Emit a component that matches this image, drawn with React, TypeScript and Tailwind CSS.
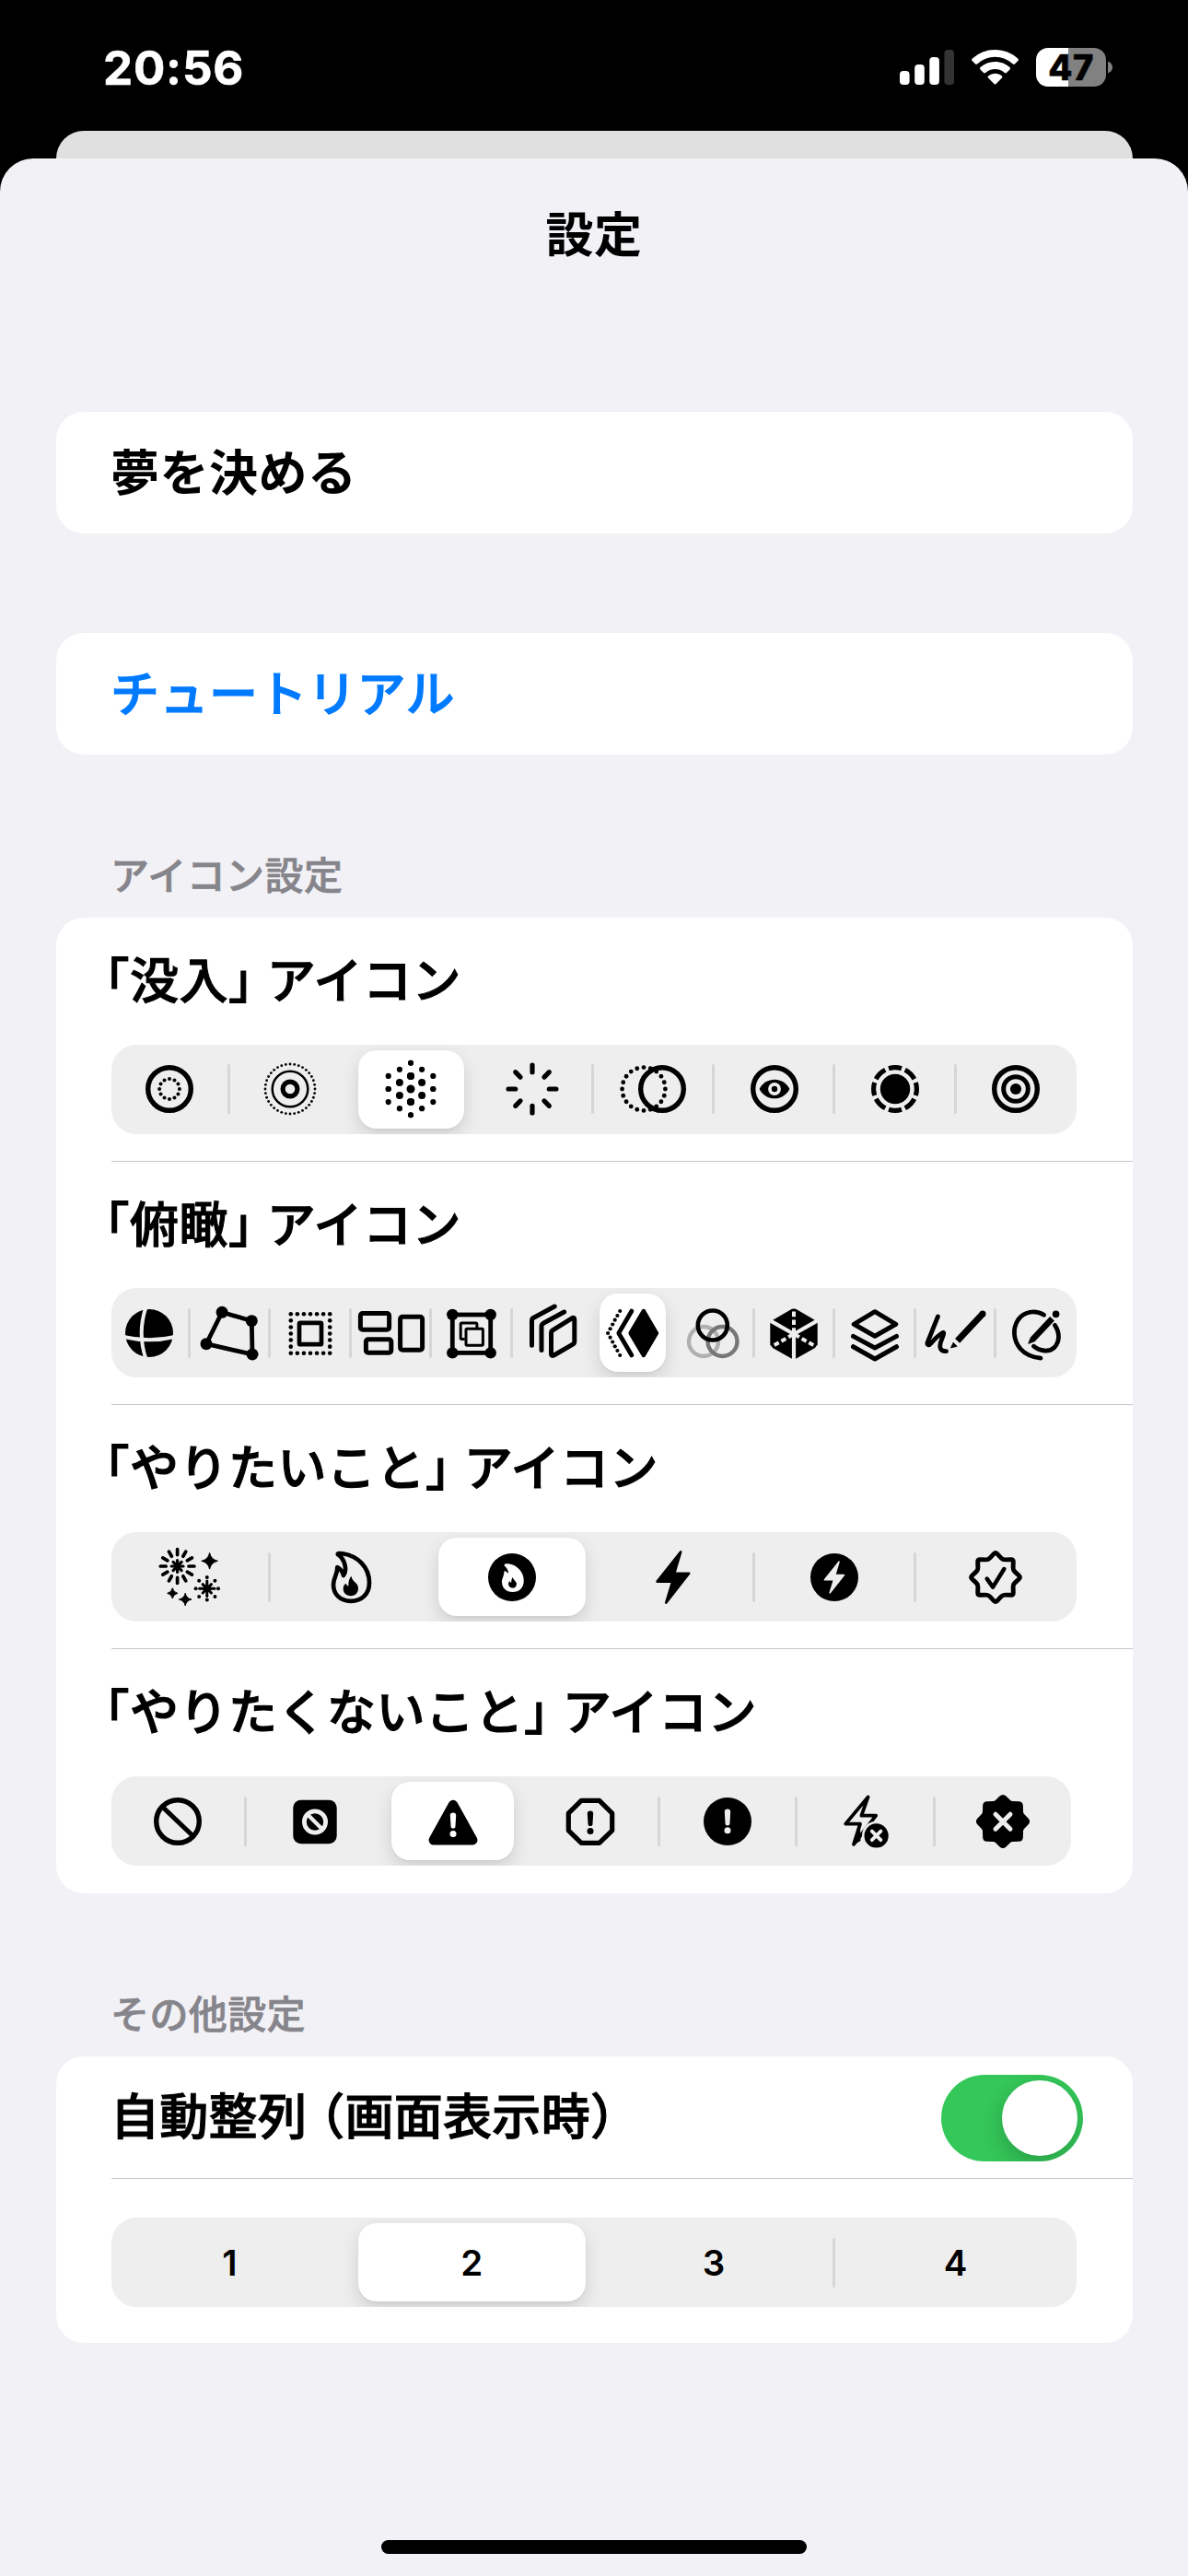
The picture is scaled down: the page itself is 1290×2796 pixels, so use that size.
import React from "react";

const TRACK = "#eeeeef";

function Glyph({ children }: { children: React.ReactNode }) {
  return (
    <svg viewBox="-40 -40 80 80" className="size-20 shrink-0 overflow-visible" fill="none" stroke="none">
      {children}
    </svg>
  );
}

function polar(r: number, deg: number, cx = 0, cy = 0): [number, number] {
  const a = (deg * Math.PI) / 180;
  return [cx + r * Math.cos(a), cy + r * Math.sin(a)];
}

function DotRing({ n, r, dot, cx = 0, cy = 0 }: { n: number; r: number; dot: number; cx?: number; cy?: number }) {
  return (
    <g fill="#000">
      {Array.from({ length: n }, (_, i) => {
        const [x, y] = polar(r, (360 / n) * i, cx, cy);
        return <circle key={i} cx={x} cy={y} r={dot} />;
      })}
    </g>
  );
}

function Rays({ n, from, to, w, cx = 0, cy = 0 }: { n: number; from: number; to: number; w: number; cx?: number; cy?: number }) {
  return (
    <g stroke="#000" strokeWidth={w} strokeLinecap="round">
      {Array.from({ length: n }, (_, i) => {
        const [x1, y1] = polar(from, (360 / n) * i, cx, cy);
        const [x2, y2] = polar(to, (360 / n) * i, cx, cy);
        return <line key={i} x1={x1} y1={y1} x2={x2} y2={y2} />;
      })}
    </g>
  );
}

function Sparkle({ x, y, r }: { x: number; y: number; r: number }) {
  const k = r * 0.17;
  return (
    <path
      fill="#000"
      stroke="#000"
      strokeWidth="1"
      strokeLinejoin="round"
      d={`M${x},${y - r}Q${x + k},${y - k} ${x + r},${y}Q${x + k},${y + k} ${x},${y + r}Q${x - k},${y + k} ${x - r},${y}Q${x - k},${y - k} ${x},${y - r}Z`}
    />
  );
}

/* Eight-pointed seal with softened tips */
function sealPath(outer: number, inner: number) {
  const pts = Array.from({ length: 16 }, (_, i) => polar(i % 2 ? inner : outer, i * 22.5 - 90));
  const mix = (a: number[], b: number[], t: number) => [a[0] + (b[0] - a[0]) * t, a[1] + (b[1] - a[1]) * t];
  return (
    pts
      .map((p, i) => {
        const prev = pts[(i + 15) % 16];
        const next = pts[(i + 1) % 16];
        const a = mix(p, prev, 0.22);
        const b = mix(p, next, 0.22);
        return `${i ? "L" : "M"}${a[0]},${a[1]}Q${p[0]},${p[1]} ${b[0]},${b[1]}`;
      })
      .join("") + "Z"
  );
}

const FLAME =
  "M-14,-24.8C-15,-26.5 -11,-26 -9,-25.7C8,-23 20,-11 20,6C20,18 12,25.8 0,25.8C-12,25.8 -19,18 -19,8C-19,0 -14.5,-2 -14.7,-11C-11,-9 -9,-6 -8,-2C-4,-8 -6,-19 -14,-24.8Z";
const EMBER = "M0.5,-1.3C1.5,5 8,6 8,12C8,17 4.5,20.2 0,20.2C-5,20.2 -8.3,17 -8.3,12.3C-8.3,9.5 -7,7.5 -5.2,6.8C-4.8,8 -4,9.3 -2.6,9.8C-2.8,6 -2,1 0.5,-1.3Z";
const BOLT = "M8.2,-27.6L1.2,-4.2L17.2,-4.2L-7.8,27.6L-0.8,4.6L-17.4,4.6Z";

function Bang({ color, top = -9, bottom = 4.5, dot = 10 }: { color: string; top?: number; bottom?: number; dot?: number }) {
  return (
    <g fill={color}>
      <path d={`M-3.2,${top}A3.2,3 0 0 1 3.2,${top}L2.5,${bottom}A2.5,2.6 0 0 1 -2.5,${bottom}Z`} />
      <circle cx="0" cy={dot} r="3.5" />
    </g>
  );
}

const Ring = ({ r = 23.3, w = 5.4, cx = 0, cy = 0, c = "#000" }: { r?: number; w?: number; cx?: number; cy?: number; c?: string }) => (
  <circle cx={cx} cy={cy} r={r} stroke={c} strokeWidth={w} />
);

const immersionIcons = [
  <Glyph>
    <Ring />
    <DotRing n={12} r={10.9} dot={2} />
  </Glyph>,
  <Glyph>
    <DotRing n={36} r={27} dot={1.4} />
    <Ring r={19.3} w={2.5} />
    <Ring r={7.9} w={5.2} />
  </Glyph>,
  <Glyph>
    <g fill="#000">
      <circle r="4.5" />
      {[[0, 14.1, 4], [0, 28.2, 3], [12.1, 7, 4], [12.1, 21.2, 3.1], [24.3, 14.1, 3.1], [24.3, 0, 3.1]].map(([x, y, r]) =>
        [[1, 1], [1, -1], [-1, 1], [-1, -1]].map(([a, b]) => <circle key={`${x}${y}${a}${b}`} cx={x * a} cy={y * b} r={r} />)
      )}
    </g>
  </Glyph>,
  <Glyph>
    <Rays n={8} from={18.3} to={25.9} w={5.2} />
  </Glyph>,
  <Glyph>
    <DotRing n={20} r={23.4} dot={2.4} cx={-10} />
    <Ring cx={10} />
  </Glyph>,
  <Glyph>
    <Ring />
    <path fill="#000" d="M-16.4,0C-13,-7 -6.5,-10.3 0,-10.3C6.5,-10.3 13,-7 16.4,0C13,7 6.5,10.3 0,10.3C-6.5,10.3 -13,7 -16.4,0Z" />
    <circle r="6.9" fill={TRACK} />
    <circle r="3.2" fill="#000" />
  </Glyph>,
  <Glyph>
    <circle r="23.4" stroke="#000" strokeWidth="5.2" pathLength="80" strokeDasharray="7.8 2.2" strokeDashoffset="3.9" />
    <circle r="16.2" fill="#000" />
  </Glyph>,
  <Glyph>
    <Ring />
    <Ring r={13.3} w={5} />
    <circle r="6.1" fill="#000" />
  </Glyph>,
];

const overviewIcons = [
  <Glyph>
    <circle r="26" fill="#000" />
    <g stroke={TRACK} strokeWidth="4">
      <path d="M-3.6,-28Q-13,0 -3.6,28" />
      <path d="M-28,4Q0,10.6 28,4" />
    </g>
  </Glyph>,
  <Glyph>
    <path d="M-7.9,-22.7L24.3,-13.3L25,23L-25,11.7Z" stroke="#000" strokeWidth="4.8" />
    <g fill="#000">
      <circle cx="-7.9" cy="-22.7" r="6.5" />
      <circle cx="24.3" cy="-13.3" r="6.5" />
      <circle cx="25" cy="23" r="6.5" />
      <circle cx="-25" cy="11.7" r="6.5" />
    </g>
  </Glyph>,
  <Glyph>
    <g fill="#000">
      {[-3, -2, -1, 0, 1, 2, 3].map((i) =>
        [-3, -2, -1, 0, 1, 2, 3].map((j) =>
          Math.max(Math.abs(i), Math.abs(j)) === 3 ? <circle key={`${i}${j}`} cx={i * 7.07} cy={j * 7.07 + 0.5} r="2.3" /> : null
        )
      )}
    </g>
    <rect x="-12" y="-11.2" width="24" height="23.4" rx="1" stroke="#000" strokeWidth="4.7" />
  </Glyph>,
  <Glyph>
    <g stroke="#000" strokeWidth="5">
      <rect x="-33.6" y="-21.5" width="31.2" height="17.8" rx="2.4" />
      <rect x="-27.6" y="6.8" width="27.4" height="14.4" rx="2.4" />
      <rect x="9.6" y="-17.8" width="24" height="36" rx="2.4" />
    </g>
  </Glyph>,
  <Glyph>
    <rect x="-20.7" y="-20" width="41.4" height="41.4" stroke="#000" strokeWidth="4.8" />
    <g fill="#000">
      <circle cx="-20.7" cy="-20" r="6.2" />
      <circle cx="20.7" cy="-20" r="6.2" />
      <circle cx="-20.7" cy="21.4" r="6.2" />
      <circle cx="20.7" cy="21.4" r="6.2" />
    </g>
    <g stroke="#000" strokeWidth="3">
      <path d="M-7.3,6.6H-10.6A1.2,1.2 0 0 1 -11.8,5.4V-9.7A1.2,1.2 0 0 1 -10.6,-10.9H4.7A1.2,1.2 0 0 1 5.9,-9.7V-6" />
      <rect x="-6" y="-4.8" width="18.4" height="18" rx="1.2" />
    </g>
  </Glyph>,
  <Glyph>
    <g stroke="#000" strokeWidth="5" strokeLinecap="round" strokeLinejoin="round">
      <path d="M-22.5,13.3V-13.6Q-22.5,-15.5 -20.5,-16.8L2.2,-29" />
      <path d="M-12,18.6V-7.6Q-12,-9.5 -10,-10.7L12.6,-23" />
      <path d="M-1.5,0Q-1.5,-2 0.5,-3.3L21,-16.2Q23.8,-17.6 23.8,-14.6V9Q23.8,11 22,12.1L1.5,24Q-1.5,25.4 -1.5,22.5Z" />
    </g>
  </Glyph>,
  <Glyph>
    <path d="M-2.4,0L11.9,-24L26,0L11.9,24Z" fill="#000" stroke="#000" strokeWidth="4.4" strokeLinejoin="round" />
    <path d="M-1.1,-24L-15.2,0L-1.1,24" stroke="#000" strokeWidth="4.8" strokeLinecap="round" strokeLinejoin="round" />
    <g fill="#000">
      <circle cx="-26.9" cy="0" r="2.1" />
      {[[-13.8, 24], [-16.6, 19], [-19.3, 14.3], [-21.8, 9.5], [-24.4, 4.7]].map(([x, y]) => (
        <React.Fragment key={x}>
          <circle cx={x} cy={y} r="2.1" />
          <circle cx={x} cy={-y} r="2.1" />
        </React.Fragment>
      ))}
    </g>
  </Glyph>,
  <Glyph>
    <Ring cx={-11} cy={9} r={16} w={4.4} c="#b0b0b0" />
    <Ring cx={9.5} cy={9} r={16} w={4.4} c="#777777" />
    <Ring cx={-1.2} cy={-8.5} r={16} w={4.6} />
  </Glyph>,
  <Glyph>
    <path d="M0,-27.5L25.7,-12.5V14.5L0,29L-25.7,14.5V-12.5Z" fill="#000" />
    <g stroke={TRACK} strokeWidth="4.2">
      <path d="M0,1V31M0,1L-27.5,-14.6M0,1L27.5,-14.6" />
    </g>
    <g stroke={TRACK} strokeWidth="4" strokeDasharray="5.6 3.2" strokeDashoffset="-1.2">
      <path d="M0,1V-29" />
      <path d="M0,1L-27.5,16.6" />
      <path d="M0,1L27.5,16.6" />
    </g>
  </Glyph>,
  <Glyph>
    <g stroke="#000" strokeWidth="5" strokeLinejoin="round" strokeLinecap="round">
      <path d="M0,-23.3L22.8,-9.7L0,3.2L-22.8,-9.7Z" />
      <path d="M-23.5,3.4L0,16L23.5,3.4" />
      <path d="M-23.5,14.7L0,28L23.5,14.7" />
    </g>
  </Glyph>,
  <Glyph>
    <path
      d="M-19.6,-18L-31,10.5C-31.5,13.5 -29,13.5 -27,11C-21,4 -17,1 -14,-0.6C-12.5,-1 -13.5,2 -15.5,7C-18.5,14 -18,20 -10.5,19.6"
      stroke="#000"
      strokeWidth="4.8"
      strokeLinecap="round"
      strokeLinejoin="round"
    />
    <path d="M29.2,-21.2L1.6,8.4" stroke="#000" strokeWidth="7" />
    <circle cx="29" cy="-21" r="3.5" fill="#000" />
    <path d="M-2.8,10.2L1.2,14.3L-5.6,16Z" fill="#000" stroke="#000" strokeWidth="0.8" strokeLinejoin="round" />
  </Glyph>,
  <Glyph>
    <g stroke="#000" strokeWidth="4.8" strokeLinecap="round">
      <path d="M8.6,-19.8C-1,-25.6 -13,-23.6 -19.5,-14.5C-26,-4.5 -24.5,8 -17,17C-12,22.6 -4,26.2 5,27.2" />
      <path d="M-2.6,14.2C4,19.6 14,21.2 20,15.5C25.8,9 26,-0.5 20.4,-8.6" />
    </g>
    <path d="M17.5,-15.8L-3.4,6.5" stroke="#000" strokeWidth="6.6" />
    <path d="M-5.7,4.6L-1,8.6L-8.3,11.4Z" fill="#000" stroke="#000" strokeWidth="0.8" strokeLinejoin="round" />
    <circle cx="21.6" cy="-20.6" r="3.8" fill="#000" />
  </Glyph>,
];

const wantIcons = [
  <Glyph>
    <Rays n={12} from={12.4} to={18.3} w={3.7} cx={-13.4} cy={-12} />
    <Rays n={8} from={0} to={6.4} w={3.2} cx={-13.4} cy={-12} />
    <Rays n={4} from={0} to={8.2} w={3} cx={18.8} cy={12.3} />
    <g transform="rotate(45 18.8 12.3)">
      <Rays n={4} from={0} to={6.6} w={3} cx={18.8} cy={12.3} />
    </g>
    <circle cx="18.8" cy="12.3" r="4" fill="#000" />
    <DotRing n={8} r={12.2} dot={2} cx={18.8} cy={12.3} />
    <Sparkle x={21.6} y={-17.7} r={8.8} />
    <Sparkle x={-18.7} y={17.3} r={5.6} />
    <Sparkle x={-4.8} y={24} r={6.8} />
  </Glyph>,
  <Glyph>
    <path d={FLAME} stroke="#000" strokeWidth="4.7" strokeLinejoin="round" />
    <path d={EMBER} fill="#000" />
  </Glyph>,
  <Glyph>
    <circle r="26" fill="#000" />
    <g transform="translate(0.6 0.6) scale(0.545)">
      <path d={FLAME} fill="#fff" stroke="#fff" strokeWidth="4.7" strokeLinejoin="round" />
      <path d={EMBER} fill="#000" />
    </g>
  </Glyph>,
  <Glyph>
    <path d={BOLT} fill="#000" stroke="#000" strokeWidth="2.6" strokeLinejoin="round" />
  </Glyph>,
  <Glyph>
    <circle r="26" fill="#000" />
    <path d={BOLT} transform="scale(0.61)" fill={TRACK} stroke={TRACK} strokeWidth="2.6" strokeLinejoin="round" />
  </Glyph>,
  <Glyph>
    <path d={sealPath(27.4, 20.6)} stroke="#000" strokeWidth="4.9" strokeLinejoin="round" />
    <path d="M-9.3,1.6L-2.9,10.6L9.3,-9" stroke="#000" strokeWidth="4.5" strokeLinecap="round" strokeLinejoin="round" />
  </Glyph>,
];

const avoidIcons = [
  <Glyph>
    <Ring />
    <path d="M-16.4,-15.6L16.4,15.6" stroke="#000" strokeWidth="4.9" />
  </Glyph>,
  <Glyph>
    <rect x="-23.7" y="-23.2" width="47.4" height="47.4" rx="8.5" fill="#000" />
    <Ring r={11.6} w={4.8} c={TRACK} cy={0.5} />
    <path d="M-8,-7.5L8,8.5" stroke={TRACK} strokeWidth="4.2" />
  </Glyph>,
  <Glyph>
    <path d="M0,-18L21.2,20.2H-21.2Z" fill="#000" stroke="#000" strokeWidth="10.5" strokeLinejoin="round" />
    <Bang color="#fff" top={-6.4} bottom={5} dot={13.6} />
  </Glyph>,
  <Glyph>
    <path d="M-9.8,-22.6H9.8L23.7,-8.8V9.8L9.8,23.4H-9.8L-23.7,9.8V-8.8Z" stroke="#000" strokeWidth="5.2" strokeLinejoin="round" />
    <Bang color="#000" top={-8.6} bottom={2.4} dot={10.4} />
  </Glyph>,
  <Glyph>
    <circle r="26" fill="#000" />
    <Bang color={TRACK} top={-10.4} bottom={1.8} dot={9.8} />
  </Glyph>,
  <Glyph>
    <path d="M2.6,-26.6L-4.6,-6.4H11.2L-13,24.8L-6,2.6L-21.8,2.6Z" stroke="#000" strokeWidth="3.8" strokeLinejoin="round" />
    <path d="M-6,4L-14,26L-5.5,21Z" fill="#000" />
    <circle cx="11.6" cy="15.4" r="15.6" fill={TRACK} />
    <circle cx="11.6" cy="15.4" r="13.1" fill="#000" />
    <path d="M6.8,10.6L16.4,20.2M16.4,10.6L6.8,20.2" stroke={TRACK} strokeWidth="3.8" strokeLinecap="round" />
  </Glyph>,
  <Glyph>
    <path d={sealPath(27.4, 21.2)} fill="#000" stroke="#000" strokeWidth="4.9" strokeLinejoin="round" />
    <path d="M-8,-7.8L8,8.2M8,-7.8L-8,8.2" stroke={TRACK} strokeWidth="5" strokeLinecap="round" />
  </Glyph>,
];

function Segmented({ items, selected, narrow = false }: { items: React.ReactNode[]; selected: number; narrow?: boolean }) {
  return (
    <div className={`${narrow ? "w-[1042px]" : "w-[1048px]"} h-[97px] overflow-hidden rounded-[27px] bg-[#eeeeef]`}>
      <div className={`${narrow ? "w-[1046px]" : "w-[1051px]"} -ml-[3px] flex h-full items-center`}>
        {items.map((item, i) => (
          <div key={i} className="flex h-full min-w-0 flex-1 items-center">
            <div
              className={`mr-[6px] ml-[8px] flex h-[85px] min-w-0 flex-1 items-center justify-center ${
                i === selected ? "rounded-[20px] bg-white shadow-[0_8px_20px_rgba(0,0,0,0.13),0_2px_3px_rgba(0,0,0,0.04)]" : ""
              }`}
            >
              {item}
            </div>
            <div
              className={`-mr-[1px] h-[54px] w-[3px] rounded-full ${
                i === selected || i === selected - 1 || i === items.length - 1 ? "" : "bg-[#d6d6d7]"
              }`}
            />
          </div>
        ))}
      </div>
    </div>
  );
}

function PickerRow({ label, children, last = false }: { label: string; children: React.ReactNode; last?: boolean }) {
  return (
    <div className={`flex flex-col ${last ? "h-[265px]" : "h-[264.7px]"}`}>
      <div className="ml-[53px] flex h-[138px] items-center pt-[1px] text-[53px] leading-none font-medium tracking-[0.5px] whitespace-pre [-webkit-text-stroke:1.1px_currentColor] [font-feature-settings:'halt']">
        {label}
      </div>
      <div className="ml-[60px]">{children}</div>
      {!last && <div className="mt-[29px] ml-[60px] h-px bg-[#c6c6c8]" />}
    </div>
  );
}

function SectionHeader({ children }: { children: React.ReactNode }) {
  return (
    <h2 className="ml-[120px] pt-[1px] text-[42px] leading-[60px] font-medium tracking-[0.4px] text-[#86858b] [-webkit-text-stroke:0.7px_currentColor]">
      {children}
    </h2>
  );
}

function StatusBar() {
  return (
    <header className="flex h-[142px] items-start justify-between pt-[52px] pr-[82px] pl-[112px] text-white">
      <span className="-mt-[4px] font-['Inter'] text-[51px] leading-[51px] font-bold tracking-[0.8px] [-webkit-text-stroke:0.6px_currentColor]">20:56</span>
      <div className="flex items-start">
        <svg viewBox="0 0 59 38" className="mt-[2px] h-[38px] w-[59px]" fill="#fff">
          <rect x="0" y="23" width="10.6" height="15" rx="4" />
          <rect x="16.2" y="16" width="10.6" height="22" rx="4" />
          <rect x="32.3" y="8" width="10.6" height="30" rx="4" />
          <rect x="48.4" y="0" width="10.6" height="38" rx="4" fill="#333" />
        </svg>
        <svg viewBox="0 0 51 38" className="mt-[2px] ml-[19px] h-[38px] w-[51px]" fill="#fff">
          <path d="M25.5,0C35,0 43.8,3.6 50.4,9.7Q51.4,10.8 50.4,11.9L46.9,15.4Q46,16.3 44.9,15.4A28.3,28.3 0 0 0 6.1,15.4Q5,16.3 4.1,15.4L0.6,11.9Q-0.4,10.8 0.6,9.7A36.5,36.5 0 0 1 25.5,0Z" />
          <path d="M25.5,13C31.6,13 37.2,15.3 41.5,19.1Q42.6,20.2 41.5,21.4L37.9,25Q37,25.8 35.9,24.9A15.5,15.5 0 0 0 15.1,24.9Q14,25.8 13.1,25L9.5,21.4Q8.4,20.2 9.5,19.1A24,24 0 0 1 25.5,13Z" />
          <path d="M25.5,25.8C28.3,25.8 30.9,26.8 32.9,28.5Q34,29.5 33,30.6L26.6,37Q25.5,38 24.4,37L18,30.6Q17,29.5 18.1,28.5A11.5,11.5 0 0 1 25.5,25.8Z" />
        </svg>
        <div className="ml-[19px] flex items-center">
          <div className="flex h-[42px] w-[76px] items-center justify-center rounded-[13px] bg-[linear-gradient(90deg,#fff_0_35.5px,#818181_35.5px)] font-['Inter'] text-[38px] leading-none font-extrabold tracking-[0.6px] text-black [-webkit-text-stroke:0.6px_currentColor]">
            47
          </div>
          <svg viewBox="0 0 5 14" className="ml-[2px] h-[14px] w-[5px]">
            <path d="M0,0.5Q5,2.5 5,7T0,13.5Z" fill="#818181" />
          </svg>
        </div>
      </div>
    </header>
  );
}

export default function App() {
  return (
    <div
      lang="ja"
      className="flex h-[2796px] w-[1290px] flex-col overflow-hidden bg-black font-['Inter','Noto_Sans_CJK_JP',sans-serif] text-black [text-spacing-trim:space-all]"
    >
      <StatusBar />
      <div className="mr-[60px] ml-[61px] h-[30px] shrink-0 rounded-t-[30px] bg-[#e0e0e0]" />
      <main className="flex min-h-0 flex-1 flex-col rounded-t-[36px] bg-[#f2f1f6]">
        <h1 className="mt-[54px] mb-[-1px] text-center text-[52px] leading-[60px] font-bold tracking-[0.5px]">設定</h1>

        <button className="mt-[162px] mr-[60px] ml-[61px] flex h-[132px] items-center rounded-[30px] bg-white pt-[2px] pl-[59px] text-[53px] leading-none font-bold tracking-[0.5px]">
          夢を決める
        </button>
        <button className="mt-[108px] mr-[60px] ml-[61px] flex h-[132px] items-center rounded-[30px] bg-white pt-[2px] pl-[59px] text-[53px] leading-none font-medium tracking-[0.5px] text-[#007aff] [-webkit-text-stroke:1.1px_currentColor]">
          チュートリアル
        </button>

        <div className="mt-[101px]">
          <SectionHeader>アイコン設定</SectionHeader>
        </div>
        <section className="mt-[15px] mr-[60px] ml-[61px] h-[1059px] rounded-[30px] bg-white">
          <PickerRow label="「没入」 アイコン">
            <Segmented items={immersionIcons} selected={2} />
          </PickerRow>
          <PickerRow label="「俯瞰」 アイコン">
            <Segmented items={overviewIcons} selected={6} />
          </PickerRow>
          <PickerRow label="「やりたいこと」 アイコン">
            <Segmented items={wantIcons} selected={2} />
          </PickerRow>
          <PickerRow label="「やりたくないこと」 アイコン" last>
            <Segmented items={avoidIcons} selected={2} narrow />
          </PickerRow>
        </section>

        <div className="mt-[101px]">
          <SectionHeader>その他設定</SectionHeader>
        </div>
        <section className="mt-[15px] mr-[60px] ml-[61px] h-[311px] shrink-0 rounded-[30px] bg-white">
          <div className="ml-[59px] flex h-[132px] items-center justify-between pt-[1px] pr-[54px]">
            <span className="text-[53px] leading-none font-medium tracking-[0.3px] whitespace-pre [-webkit-text-stroke:1.1px_currentColor] [font-feature-settings:'halt']">
              自動整列 （画面表示時）
            </span>
            <div className="flex h-[94px] w-[154px] items-center justify-end overflow-hidden rounded-full bg-[#34c759] pr-[6px]">
              <div className="size-[82px] rounded-full bg-white shadow-[0_9px_24px_rgba(0,0,0,0.2)]" />
            </div>
          </div>
          <div className="ml-[60px] h-px bg-[#c6c6c8]" />
          <div className="mt-[42px] ml-[60px]">
            <Segmented
              items={["1", "2", "3", "4"].map((n) => (
                <span key={n} className="pt-[2px] text-[38.5px] leading-none font-semibold">
                  {n}
                </span>
              ))}
              selected={1}
            />
          </div>
        </section>
        <div className="mx-auto mt-auto mb-[24px] h-[15px] w-[462px] rounded-full bg-black" />
      </main>
    </div>
  );
}
